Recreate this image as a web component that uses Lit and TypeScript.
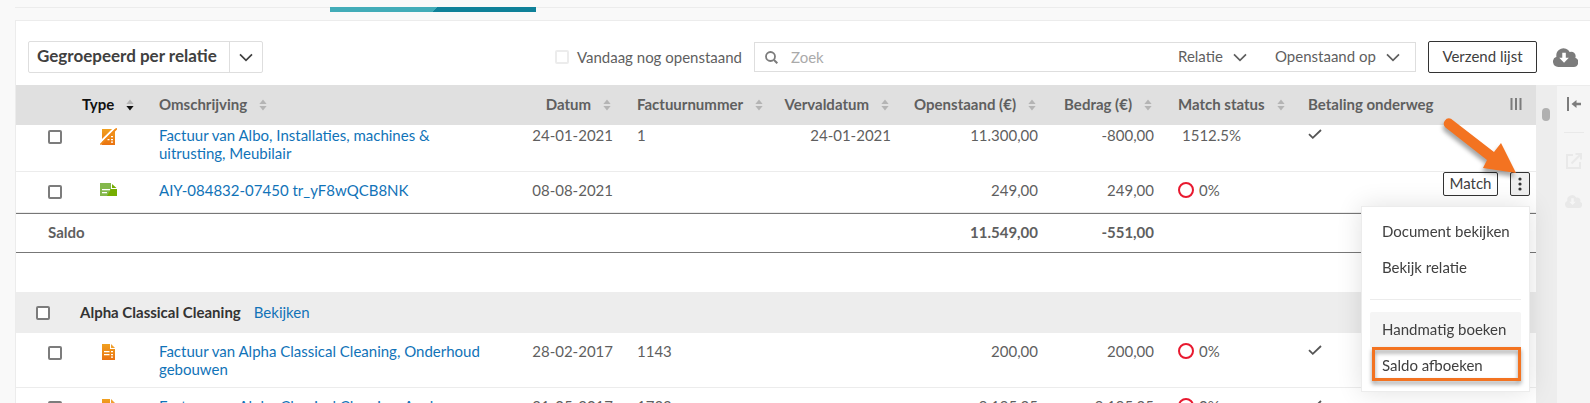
import { LitElement, html, css, svg, nothing } from "lit";
import { customElement } from "lit/decorators.js";
import { classMap } from "lit/directives/class-map.js";

type Kind = "invoice" | "invoice-off" | "bank";

interface Entry {
  kind: Kind;
  text: string;
  date: string;
  number: string;
  due: string;
  open: string;
  amount: string;
  match: string;
  partial?: boolean;
  underway: boolean;
  menu?: boolean;
}

const albo: Entry[] = [
  { kind: "invoice-off", text: "Factuur van Albo, Installaties, machines & uitrusting, Meubilair", date: "24-01-2021", number: "1", due: "24-01-2021", open: "11.300,00", amount: "-800,00", match: "1512.5%", partial: true, underway: true },
  { kind: "bank", text: "AIY-084832-07450 tr_yF8wQCB8NK", date: "08-08-2021", number: "", due: "", open: "249,00", amount: "249,00", match: "0%", underway: false, menu: true },
];

const alpha: Entry[] = [
  { kind: "invoice", text: "Factuur van Alpha Classical Cleaning, Onderhoud gebouwen", date: "28-02-2017", number: "1143", due: "", open: "200,00", amount: "200,00", match: "0%", underway: true },
  { kind: "invoice", text: "Factuur van Alpha Classical Cleaning, Aankoop goederen", date: "21-05-2017", number: "1733", due: "", open: "9.195,25", amount: "9.195,25", match: "0%", underway: true },
];

const columns = [
  { label: "Type", cls: "active", sort: true },
  { label: "Omschrijving", cls: "", sort: true },
  { label: "Datum", cls: "end", sort: true },
  { label: "Factuurnummer", cls: "", sort: true },
  { label: "Vervaldatum", cls: "end", sort: true },
  { label: "Openstaand (€)", cls: "end", sort: true },
  { label: "Bedrag (€)", cls: "end", sort: true },
  { label: "Match status", cls: "", sort: true },
  { label: "Betaling onderweg", cls: "", sort: false },
];

const chevron = html`<svg class="chevron" viewBox="0 0 14 9" width="14" height="9" aria-hidden="true"><path d="M1 1.300 7 7.300 13 1.300" fill="none" stroke="currentColor" stroke-width="1.700"/></svg>`;

const sortIcon = html`<svg class="sort" viewBox="0 0 8 12" width="8" height="12" aria-hidden="true"><path class="up" d="M4 .5 7.600 5H.4z"/><path class="down" d="M4 11.500 7.600 7H.4z"/></svg>`;

const cloud = (w: number, h: number) => html`<svg viewBox="0 0 24 18" width=${w} height=${h} aria-hidden="true">
  <path fill="currentColor" fill-rule="evenodd" d="M5 18A5 5 0 0 1 3.300 8.300 6.800 6.800 0 0 1 16 3.800a4.200 4.200 0 0 1 5.400 5.500A4.500 4.500 0 0 1 19.500 18zM8.900 4.500v4.800H6l4.600 4.800 4.600-4.800h-2.900V4.500z"/></svg>`;

const sheet = svg`
  <path fill="url(#og)" d="M0 0h8v5h5v11H0z"/><path fill="#f0a030" d="M9 0l4 4H9z"/>
  <path fill="#fff" d="M2 7h5.500v1.300H2zM2 10h5.500v1.300H2zM9 7h2v1.300H9zM9 10h2v1.300H9zM9 12.500h2v1.300H9z"/>`;
const gradient = svg`<defs><linearGradient id="og" x1="0" y1="0" x2="0" y2="1"><stop offset="0" stop-color="#f0a020"/><stop offset="1" stop-color="#ea7210"/></linearGradient></defs>`;

const kindIcon = (kind: Kind) => {
  if (kind === "bank")
    return html`<svg viewBox="0 0 17 13" width="17" height="13" role="img" aria-label="Bank">
      <path fill="#84b84c" d="M0 0h11v6h6v7H0z"/><path fill="#76ad00" d="M7 13 11 6h6v7zM12 1l4.500 4H12z"/>
      <path fill="#fff" d="M2 6h8v1.300H2zM2 9h5v1.300H2z"/></svg>`;
  if (kind === "invoice-off")
    return html`<svg viewBox="0 0 17 17" width="17" height="17" role="img" aria-label="Factuur">${gradient}
      <path fill="url(#og)" d="M2 1h13v16H2z"/>
      <path fill="#fff" d="M11 8h2v1.300h-2zM11 11h2v1.300h-2zM11 13.500h2v1.300h-2zM7.500 11H9.500v1.300H7.500z"/>
      <path d="M-1 15.500 16 -1.500" stroke="#fff" stroke-width="2"/>
      <path d="M.4 16.600 16.800 .4" stroke="#f0891a" stroke-width="1.700"/></svg>`;
  return html`<svg viewBox="0 0 13 16" width="13" height="16" role="img" aria-label="Factuur">${gradient}${sheet}</svg>`;
};

@customElement("app-root")
export class AppRoot extends LitElement {
  static styles = css`
    :host {
      display: flex;
      flex-direction: column;
      height: 100vh;
      overflow: hidden;
      background: #f9f9f9;
      color: #5f5f5f;
      font: 15px/18px Lato, "Noto Sans", sans-serif;
    }
    *, *::before, *::after { box-sizing: border-box; }
    svg { display: block; flex: none; }
    button, select, input { font: inherit; color: inherit; margin: 0; }
    a { color: #1173b8; text-decoration: none; }

    .tabs { margin: 7px 0 8px 15px; border-top: 1px solid #ececec; padding-left: 315px; }
    .tab { width: 206px; height: 5px; margin-top: -1px; background: linear-gradient(135deg, #42acb8 0 51%, #0f8199 51%); }

    .panel { flex: 1; min-height: 0; margin-left: 15px; display: flex; flex-direction: column; background: #fff; border: solid #ececec; border-width: 1px 0 0 1px; }
    .toolbar { display: flex; align-items: center; height: 64px; padding: 8px 12px 0; flex: none; }

    .picker { position: relative; display: inline-flex; align-items: center; }
    .picker select { appearance: none; border: 0; background: none; outline: none; padding: 0 0 2px; height: 28px; }
    .picker .chevron { position: absolute; right: 0; pointer-events: none; }
    .filter select { padding-right: 24px; }
    .group { height: 32px; border: 1px solid #dedede; border-radius: 2px; color: #404040; margin-right: auto; }
    .group select { height: 30px; padding: 0 44px 2px 8px; font-size: 17px; font-weight: 700; }
    .group .split { position: absolute; right: 32px; width: 1px; height: 100%; background: #dedede; pointer-events: none; }
    .group .chevron { right: 9px; }

    .box { appearance: none; display: block; width: 14px; height: 14px; border: 2px solid #7c7c7c; border-radius: 2px; background: #fff; }
    .today { display: flex; align-items: center; gap: 8px; margin-right: 12px; }
    .today .box { border-color: #ececec; }

    .search { display: flex; align-items: center; flex: 0 1 662px; height: 30px; border: 1px solid #dedede; padding: 0 15px 0 10px; }
    .search input { flex: 1; min-width: 0; border: 0; outline: 0; background: none; padding: 0 12px 0 13px; }
    .search input::placeholder { color: #aaa; opacity: 1; }
    .search .picker + .picker { margin-left: 28px; }
    .send { height: 32px; width: 109px; margin: 0 16px 0 12px; padding: 0 0 2px; border: 1px solid #333; border-radius: 2px; background: #fff; color: #404040; }
    .download { border: 0; padding: 0; background: none; color: #7c7c7c; }

    .content { flex: 1; min-height: 0; display: flex; }
    .viewport { position: relative; flex: 1; min-width: 0; display: flex; }
    .scroller { flex: 1; min-width: 0; overflow: hidden; padding-right: 21px; background: #ededed; }
    .thumb { position: absolute; top: 23px; right: 7px; width: 8px; height: 13px; border-radius: 4px; background: #b0b0b0; }

    table { width: 100%; border-spacing: 0; table-layout: fixed; background: #fff; }
    .c-box { width: 54px; } .c-type { width: 77px; } .c-date { width: 124px; } .c-num { width: 149px; }
    .c-due { width: 129px; } .c-open { width: 147px; } .c-amount { width: 116px; } .c-match { width: 130px; }
    .c-way { width: 140px; } .c-act { width: 100px; }

    thead { position: sticky; top: 0; z-index: 2; }
    th { height: 40px; padding: 0 12px 2px; background: #e0e0e0; font-weight: 700; text-align: left; white-space: nowrap; }
    .head { display: flex; align-items: center; gap: 12px; }
    .end .head { justify-content: flex-end; padding-right: 2px; }
    .sort { fill: #b4b4b4; margin-top: 2px; }
    .active { color: #111; }
    .active .down { fill: #111; }
    .cols { display: flex; justify-content: flex-end; }

    td { padding: 9px 12px; vertical-align: top; border-bottom: 1px solid #ececec; }
    .row { height: 41px; }
    td.end { text-align: right; }
    td.pick { padding: 13px 0 0 32px; }
    td.kind { padding-top: 11px; }
    td.kind svg { margin: 0 auto; }
    .match { display: flex; gap: 5px; }
    .match.partial { padding-left: 4px; }
    .ring { width: 16px; height: 16px; margin-top: 1px; border: 2px solid #e8192f; border-radius: 50%; }
    .tick { margin-top: 3px; }

    td.act { padding: 0 6px 0 0; }
    .actions { position: relative; display: flex; justify-content: flex-end; gap: 12px; }
    .actions button { height: 24px; padding: 0 0 2px; border: 1px solid #333; border-radius: 2px; background: #fff; color: #404040; }
    .actions .go { width: 55px; }
    .actions .more { width: 20px; padding: 0; background: #efefef; display: grid; place-items: center; }

    .menu { position: absolute; z-index: 3; top: 34px; right: 0; width: 169px; padding: 7px 8px; background: #fff; border: 1px solid #ececec; box-shadow: 0 0 24px rgba(0, 0, 0, .12); }
    .actions .menu button { position: relative; display: block; width: 100%; height: 36px; padding: 0 12px 2px; border: 0; text-align: left; white-space: nowrap; }
    .actions .menu .hover { background: #f5f5f5; }
    .menu hr { margin: 13px 0 12px; border: 0; border-top: 1px solid #ececec; }
    .mark { position: absolute; inset: -1px 0 3px 2px; border: 3px solid #f37321; filter: drop-shadow(0 3px 2px rgba(0, 0, 0, .4)); }
    .arrow { position: absolute; z-index: 4; top: -60px; right: 6px; filter: drop-shadow(-1px 4px 2px rgba(0, 0, 0, .35)); pointer-events: none; }

    .sum { height: 40px; font-weight: 700; }
    .sum td { border-top: 1px solid #777; border-bottom-color: #777; padding-bottom: 0; }
    .sum td:first-child { padding-left: 32px; }
    .gap td { height: 39px; padding: 0; border: 0; }
    .sub { height: 41px; }
    .sub td { background: #ededed; border: 0; padding: 11px 10px; }
    .sub td.pick { padding: 14px 0 0 20px; }
    .sub strong { color: #333; margin-right: 13px; }

    .rail { flex: none; width: 33px; background: #f5f5f5; border-top: 1px solid #ececec; display: flex; flex-direction: column; align-items: center; padding-top: 11px; color: #e9e9e9; }
    .rail button { border: 0; padding: 0; background: none; color: inherit; }
    .rail .collapse { color: #7c7c7c; }
    .rail hr { width: 20px; margin: 21px 0 20px; border: 0; border-top: 1px solid #e9e9e9; }
    .rail .edit { margin-bottom: 26px; }
  `;

  firstUpdated() {
    const scroller = this.renderRoot.querySelector(".scroller");
    if (scroller) scroller.scrollTop = 8;
  }

  private actions() {
    return html`<div class="actions">
      <button class="go">Match</button>
      <button class="more" aria-label="Meer acties"><svg viewBox="0 0 4 14" width="4" height="14" fill="#333"><circle cx="2" cy="2" r="1.600"/><circle cx="2" cy="7" r="1.600"/><circle cx="2" cy="12" r="1.600"/></svg></button>
      <div class="menu">
        <button>Document bekijken</button>
        <button>Bekijk relatie</button>
        <hr />
        <button class="hover">Handmatig boeken</button>
        <button>Saldo afboeken<span class="mark"></span></button>
      </div>
      <svg class="arrow" viewBox="0 0 88 68" width="88" height="68" aria-hidden="true"><path fill="#f37321" d="M15 6.700 58 40 65 31 80 61 47 56 51 48 9.200 15.200A5.300 5.300 0 0 1 15 6.700z"/></svg>
    </div>`;
  }

  private row(e: Entry) {
    return html`<tr class="row">
      <td class="pick"><input class="box" type="checkbox" aria-label=${e.text} /></td>
      <td class="kind">${kindIcon(e.kind)}</td>
      <td class="desc"><a href="#">${e.text}</a></td>
      <td class="end">${e.date}</td>
      <td>${e.number}</td>
      <td class="end">${e.due}</td>
      <td class="end">${e.open}</td>
      <td class="end">${e.amount}</td>
      <td><div class=${classMap({ match: true, partial: !!e.partial })}>${e.partial ? nothing : html`<span class="ring"></span>`}${e.match}</div></td>
      <td>${e.underway ? html`<svg class="tick" viewBox="0 0 14 10" width="14" height="10" role="img" aria-label="Ja"><path d="M1 5.200 4.800 8.800 13 1" fill="none" stroke="#555" stroke-width="1.800"/></svg>` : nothing}</td>
      <td class="act">${e.menu ? this.actions() : nothing}</td>
    </tr>`;
  }

  render() {
    return html`
      <div class="tabs"><div class="tab"></div></div>
      <main class="panel">
        <div class="toolbar">
          <span class="picker group"><select aria-label="Weergave"><option>Gegroepeerd per relatie</option></select><span class="split"></span>${chevron}</span>
          <label class="today"><input class="box" type="checkbox" />Vandaag nog openstaand</label>
          <div class="search">
            <svg viewBox="0 0 13 13" width="13" height="13" aria-hidden="true"><path d="M9 9 12.300 12.300" stroke="#7c7c7c" stroke-width="2"/><circle cx="5.500" cy="5.500" r="4.500" fill="none" stroke="#7c7c7c" stroke-width="1.800"/></svg>
            <input type="text" placeholder="Zoek" aria-label="Zoek" />
            <span class="picker filter"><select aria-label="Relatie"><option>Relatie</option></select>${chevron}</span>
            <span class="picker filter"><select aria-label="Openstaand op"><option>Openstaand op</option></select>${chevron}</span>
          </div>
          <button class="send">Verzend lijst</button>
          <button class="download" aria-label="Downloaden">${cloud(25, 19)}</button>
        </div>
        <div class="content">
          <div class="viewport">
            <div class="scroller">
              <table>
                <colgroup><col class="c-box" /><col class="c-type" /><col /><col class="c-date" /><col class="c-num" /><col class="c-due" /><col class="c-open" /><col class="c-amount" /><col class="c-match" /><col class="c-way" /><col class="c-act" /></colgroup>
                <thead><tr>
                  <th></th>
                  ${columns.map((c) => html`<th class=${c.cls}><div class="head">${c.label}${c.sort ? sortIcon : nothing}</div></th>`)}
                  <th><div class="cols"><svg viewBox="0 0 14 12" width="14" height="12" aria-hidden="true"><path d="M1.500 0v12M6 0v12M10.500 0v12" stroke="#7c7c7c" stroke-width="2"/></svg></div></th>
                </tr></thead>
                <tbody>
                  ${albo.map((e) => this.row(e))}
                  <tr class="sum"><td colspan="6">Saldo</td><td class="end">11.549,00</td><td class="end">-551,00</td><td colspan="3"></td></tr>
                  <tr class="gap"><td colspan="11"></td></tr>
                  <tr class="sub">
                    <td class="pick"><input class="box" type="checkbox" aria-label="Alpha Classical Cleaning" /></td>
                    <td colspan="10"><strong>Alpha Classical Cleaning</strong><a href="#">Bekijken</a></td>
                  </tr>
                  ${alpha.map((e) => this.row(e))}
                </tbody>
              </table>
            </div>
            <span class="thumb"></span>
          </div>
          <aside class="rail">
            <button class="collapse" aria-label="Inklappen"><svg viewBox="0 0 14 14" width="14" height="14"><path d="M0 0h2v14H0zM14 5.800v2.400H9.500V11L4.500 7l5-4v2.800z" fill="currentColor"/></svg></button>
            <hr />
            <button class="edit" aria-label="Bewerken"><svg viewBox="0 0 16 16" width="16" height="16" fill="none" stroke="currentColor" stroke-width="2"><path d="M7 2H1v13h13V9M5.500 10.500 14 2M9.500 1H15v5.500"/></svg></button>
            <button aria-label="Downloaden">${cloud(17, 13)}</button>
          </aside>
        </div>
      </main>
    `;
  }
}
